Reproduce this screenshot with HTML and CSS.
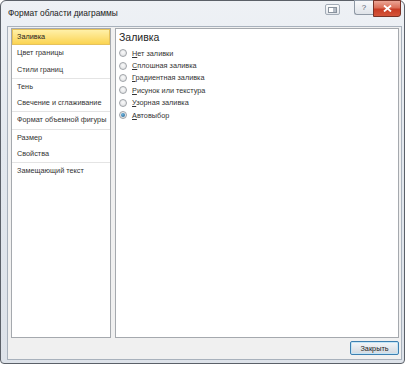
FILE: index.html
```html
<!DOCTYPE html>
<html lang="ru">
<head>
    <meta charset="UTF-8">
    <meta name="viewport" content="width=device-width, initial-scale=1.0">
    <title>Формат области диаграммы</title>
    <link rel="stylesheet" href="styles.css">
</head>
<body>
    <div class="window">
        <div class="titlebar">
            <span class="title">Формат области диаграммы</span>
            <span class="restore-button">
                <svg width="9" height="6" viewBox="0 0 9 6">
                    <rect x="0.5" y="0.5" width="8" height="5" fill="#fff" stroke="#8a939e"/>
                    <rect x="5" y="1" width="3" height="4" fill="#b4bcc6"/>
                </svg>
            </span>
            <div class="caption-group">
                <span class="help-button">?</span>
                <span class="close-button">
                    <svg width="9" height="7" viewBox="0 0 9 7">
                        <path d="M1 0.5 L8 6.5 M8 0.5 L1 6.5" stroke="#fff" stroke-width="1.8"/>
                    </svg>
                </span>
            </div>
        </div>

        <div class="client">
            <div class="panes">
                <ul class="nav">
                    <li class="nav-item selected">Заливка</li>
                    <li class="nav-item">Цвет границы</li>
                    <li class="nav-item">Стили границ</li>
                    <li class="nav-sep"></li>
                    <li class="nav-item">Тень</li>
                    <li class="nav-item">Свечение и сглаживание</li>
                    <li class="nav-sep"></li>
                    <li class="nav-item">Формат объемной фигуры</li>
                    <li class="nav-sep"></li>
                    <li class="nav-item">Размер</li>
                    <li class="nav-item">Свойства</li>
                    <li class="nav-sep"></li>
                    <li class="nav-item">Замещающий текст</li>
                </ul>

                <div class="content">
                    <h2 class="section-title">Заливка</h2>
                    <label class="option"><span class="radio"></span><span><u>Н</u>ет заливки</span></label>
                    <label class="option"><span class="radio"></span><span><u>С</u>плошная заливка</span></label>
                    <label class="option"><span class="radio"></span><span><u>Г</u>радиентная заливка</span></label>
                    <label class="option"><span class="radio"></span><span><u>Р</u>исунок или текстура</span></label>
                    <label class="option"><span class="radio"></span><span><u>У</u>зорная заливка</span></label>
                    <label class="option"><span class="radio checked"></span><span><u>А</u>втовыбор</span></label>
                </div>
            </div>

            <div class="footer">
                <button class="close-dialog">Закрыть</button>
            </div>
        </div>
    </div>
</body>
</html>
```

FILE: styles.css
```css
body {
    margin: 0;
    background-color: #ffffff;
    font-family: "Liberation Sans", Arial, sans-serif;
    color: #1e1e1e;
}

.window {
    width: 405px;
    height: 364px;
    box-sizing: border-box;
    border: 1px solid #5b6068;
    border-radius: 6px 6px 4px 4px;
    background: linear-gradient(#eef1f5, #e3e8ee 40%, #dde2e9);
    display: flex;
    flex-direction: column;
}

.titlebar {
    height: 25px;
    display: flex;
    align-items: flex-start;
    padding-left: 7px;
    padding-right: 3px;
}

.title {
    font-size: 8.4px;
    line-height: 25px;
    color: #1a1a1a;
    flex-grow: 1;
}

.restore-button {
    width: 15px;
    height: 11px;
    margin-top: 3px;
    margin-right: 14px;
    box-sizing: border-box;
    border: 1px solid #a3acb7;
    border-radius: 2px;
    background: linear-gradient(#fbfcfd, #e2e6eb);
    display: flex;
    align-items: center;
    justify-content: center;
}

.caption-group {
    display: flex;
    margin-top: -1px;
}

.help-button {
    width: 19px;
    height: 15px;
    box-sizing: border-box;
    border: 1px solid #8e98a4;
    border-right: none;
    border-radius: 0 0 0 3px;
    background: linear-gradient(#f8f9fb, #dfe3e8);
    color: #5a6370;
    font-size: 8px;
    line-height: 13px;
    text-align: center;
}

.close-button {
    width: 28px;
    height: 17px;
    box-sizing: border-box;
    border: 1px solid #7a3226;
    border-radius: 0 0 3px 0;
    background: linear-gradient(#eba595, #db6e58 45%, #c83c24 55%, #d4553a);
    display: flex;
    align-items: center;
    justify-content: center;
}

.client {
    flex-grow: 1;
    margin: 0 2px 3px 6px;
    border: 1px solid #a8b1bc;
    background-color: #f0f0f0;
    padding: 1px 2px 0 3px;
    display: flex;
    flex-direction: column;
}

.panes {
    display: flex;
    gap: 4px;
    height: 310px;
}

.nav {
    width: 100px;
    box-sizing: border-box;
    margin: 0;
    padding: 0;
    list-style: none;
    background-color: #ffffff;
    border: 1px solid #a5a9ae;
}

.nav-item {
    height: 16.25px;
    line-height: 13.5px;
    box-sizing: border-box;
    padding-left: 4px;
    border: 1px solid transparent;
    font-size: 7.3px;
    color: #333333;
    white-space: nowrap;
}

.nav-item.selected {
    border-color: #e6c25c;
    background: linear-gradient(#fff0a8, #fde27e 50%, #fbd451);
    color: #222222;
}

.nav-sep {
    height: 1px;
    background-color: #e4e4e4;
}

.content {
    flex-grow: 1;
    box-sizing: border-box;
    background-color: #ffffff;
    border: 1px solid #a5a9ae;
    padding: 1px 3px;
}

.section-title {
    margin: 0 0 3px 0;
    font-size: 10.5px;
    font-weight: normal;
    line-height: 14px;
    color: #1e1e1e;
}

.option {
    display: flex;
    align-items: center;
    gap: 5px;
    height: 12.4px;
    font-size: 7.3px;
    color: #333333;
}

.option u {
    text-decoration-thickness: 1px;
}

.radio {
    width: 8px;
    height: 8px;
    box-sizing: border-box;
    border-radius: 50%;
    border: 1px solid #a0a4a8;
    background: radial-gradient(circle at 50% 40%, #fafafa, #d9dbde);
    display: flex;
    align-items: center;
    justify-content: center;
}

.radio.checked::after {
    content: "";
    width: 4px;
    height: 4px;
    border-radius: 50%;
    background: radial-gradient(circle at 40% 35%, #6fb6e0, #1c5a8a);
}

.footer {
    display: flex;
    justify-content: flex-end;
    padding-top: 3px;
}

.close-dialog {
    width: 49px;
    height: 14px;
    padding: 0;
    border: 1px solid #3c7fb1;
    border-radius: 2px;
    background: linear-gradient(#f4f7fa, #e3e8ed 50%, #d2d9e0);
    box-shadow: inset 0 0 0 1px #c4e5f6;
    font-family: "Liberation Sans", Arial, sans-serif;
    font-size: 7.3px;
    color: #1e1e1e;
}
```
